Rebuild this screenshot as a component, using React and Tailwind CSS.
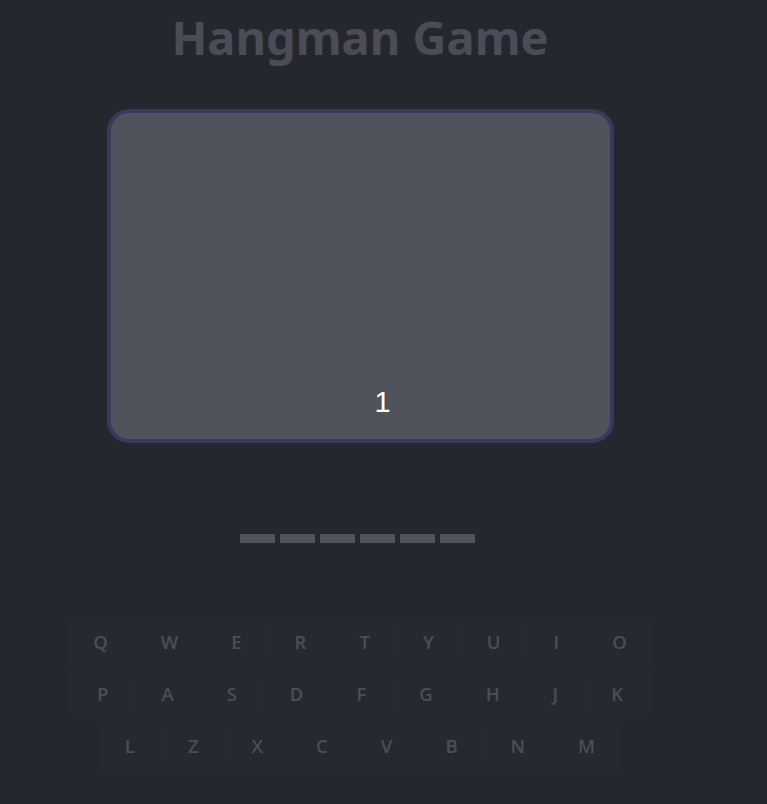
import React from "react";

const rows = [
  ["Q", "W", "E", "R", "T", "Y", "U", "I", "O"],
  ["P", "A", "S", "D", "F", "G", "H", "J", "K"],
  ["L", "Z", "X", "C", "V", "B", "N", "M"],
];

export default function App() {
  return (
    <div className="min-h-[804px] w-full bg-[#25272e]" style={{ fontFamily: '"Open Sans", sans-serif' }}>
      <div className="flex w-[720px] flex-col items-center">
        <h1 className="mt-[6px] h-[62px] text-[47px] font-bold leading-[62px] text-[#4a4d56]" style={{ fontFamily: '"Noto Sans", sans-serif' }}>
          Hangman Game
        </h1>
        <div className="relative mt-[41px] h-[334px] w-[507px] rounded-[22px] border-4 border-[#363a5e] bg-[#50535b]">
          <span className="absolute left-[264px] top-[275px] text-[29px] leading-none text-white" style={{ fontFamily: '"Liberation Sans", sans-serif' }}>
            1
          </span>
        </div>
        <div className="mt-[91px] flex gap-[5px] pr-[5px]">
          {Array.from({ length: 6 }).map((_, i) => (
            <div key={i} className="h-[9px] w-[35px] bg-[#50535b]" />
          ))}
        </div>
        <div className="mt-[75px] flex flex-col items-center gap-[4px]">
          {rows.map((row, r) => (
            <div key={r} className="flex">
              {row.map((k) => (
                <div
                  key={k}
                  className="flex h-[48px] items-center justify-center rounded-[4px] border border-[#282a30] bg-[#272930] px-[25.5px] text-[18.5px] font-semibold text-[#4b4e57]"
                >
                  {k}
                </div>
              ))}
            </div>
          ))}
        </div>
      </div>
    </div>
  );
}
